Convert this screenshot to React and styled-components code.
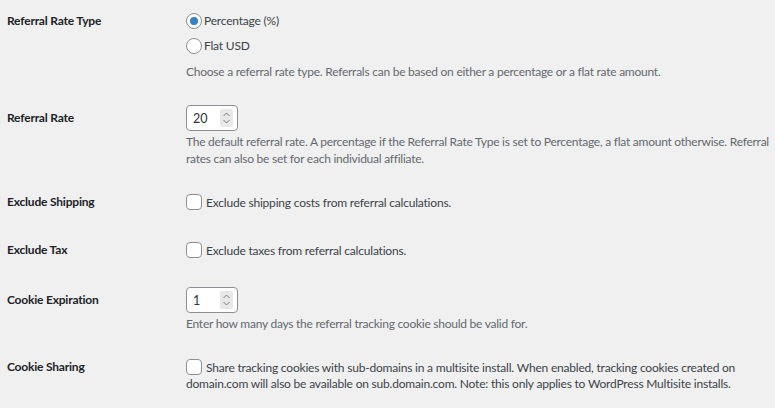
import React from 'react';
import styled, { createGlobalStyle } from 'styled-components';

const GlobalStyle = createGlobalStyle`
  html, body {
    margin: 0;
    padding: 0;
    background: #f0f0f1;
  }
  body {
    font-family: Lato, "Liberation Sans", Arial, sans-serif;
    font-size: 12px;
    letter-spacing: -0.2px;
    color: #3c434a;
  }
`;

const Page = styled.div`
  width: 775px;
  height: 408px;
  overflow: hidden;
  padding-left: 7px;
  box-sizing: border-box;
`;

const Row = styled.div`
  display: grid;
  grid-template-columns: 179px 1fr;
  padding: ${(p) => p.$pad || '15px 0'};
`;

const Label = styled.div`
  font-weight: 700;
  color: #1d2327;
  line-height: 16px;
  padding-top: ${(p) => p.$top || 0}px;
`;

const Field = styled.div`
  display: flex;
  flex-direction: column;
`;

const Option = styled.label`
  display: flex;
  align-items: center;
  gap: 2px;
  height: 25px;
  color: #3c434a;
`;

const Radio = styled.span`
  width: 14px;
  height: 14px;
  border: 1px solid #8c8f94;
  border-radius: 50%;
  background: #fff;
  display: flex;
  align-items: center;
  justify-content: center;
  &::after {
    content: '';
    display: ${(p) => (p.$checked ? 'block' : 'none')};
    width: 8px;
    height: 8px;
    border-radius: 50%;
    background: #3582c4;
  }
`;

const Check = styled.span`
  flex: none;
  width: 14px;
  height: 14px;
  border: 1px solid #8c8f94;
  border-radius: 4px;
  background: #fff;
  margin-right: 4px;
`;

const CheckLine = styled.div`
  color: #3c434a;
  line-height: 16px;
  & > span {
    display: inline-block;
    vertical-align: -3px;
  }
`;

const NumberBox = styled.div`
  border: 1px solid #8c8f94;
  border-radius: 4px;
  background: #fff;
  display: flex;
  align-items: center;
  justify-content: space-between;
  padding: 0 4px 0 6px;
  box-sizing: border-box;
  width: 52px;
  height: 26px;
  color: #2c3338;
  font-size: 12.5px;
  letter-spacing: 0;
`;

const Spinner = styled.div`
  width: 13px;
  height: 18px;
  background: #e8e8e8;
  border-radius: 2px;
  display: flex;
  align-items: center;
  justify-content: center;
`;

const Desc = styled.p`
  margin: ${(p) => p.$mt || 4}px 0 0;
  color: #646970;
  line-height: 17px;
  letter-spacing: -0.25px;
`;

const Arrows = () => (
  <svg width="9" height="14" viewBox="0 0 9 14">
    <path d="M1.5 5 L4.5 2 L7.5 5 M1.5 9 L4.5 12 L7.5 9" fill="none" stroke="#7a7a7a" strokeWidth="1" />
  </svg>
);

const NumberInput = ({ value }) => (
  <NumberBox>
    <span>{value}</span>
    <Spinner>
      <Arrows />
    </Spinner>
  </NumberBox>
);

export default function App() {
  return (
    <Page>
      <GlobalStyle />
      <Row $pad="8px 0 10px">
        <Label $top={5}>Referral Rate Type</Label>
        <Field>
          <Option>
            <Radio $checked />
            Percentage (%)
          </Option>
          <Option>
            <Radio />
            Flat USD
          </Option>
          <Desc $mt={5}>
            Choose a referral rate type. Referrals can be based on either a percentage or a flat rate amount.
          </Desc>
        </Field>
      </Row>
      <Row $pad="15px 0 12px">
        <Label $top={5}>Referral Rate</Label>
        <Field>
          <NumberInput value="20" />
          <Desc $mt={2}>
            The default referral rate. A percentage if the Referral Rate Type is set to Percentage, a flat amount otherwise. Referral rates can also be set for each individual affiliate.
          </Desc>
        </Field>
      </Row>
      <Row $pad="15px 0 16px">
        <Label>Exclude Shipping</Label>
        <Field>
          <CheckLine>
            <Check />
            Exclude shipping costs from referral calculations.
          </CheckLine>
        </Field>
      </Row>
      <Row $pad="15px 0 14px">
        <Label>Exclude Tax</Label>
        <Field>
          <CheckLine>
            <Check />
            Exclude taxes from referral calculations.
          </CheckLine>
        </Field>
      </Row>
      <Row $pad="14px 0 12px">
        <Label $top={5}>Cookie Expiration</Label>
        <Field>
          <NumberInput value="1" />
          <Desc $mt={2}>Enter how many days the referral tracking cookie should be valid for.</Desc>
        </Field>
      </Row>
      <Row>
        <Label>Cookie Sharing</Label>
        <Field>
          <CheckLine>
            <Check />
            Share tracking cookies with sub-domains in a multisite install. When enabled, tracking cookies created on domain.com will also be available on sub.domain.com. Note: this only applies to WordPress Multisite installs.
          </CheckLine>
        </Field>
      </Row>
    </Page>
  );
}
